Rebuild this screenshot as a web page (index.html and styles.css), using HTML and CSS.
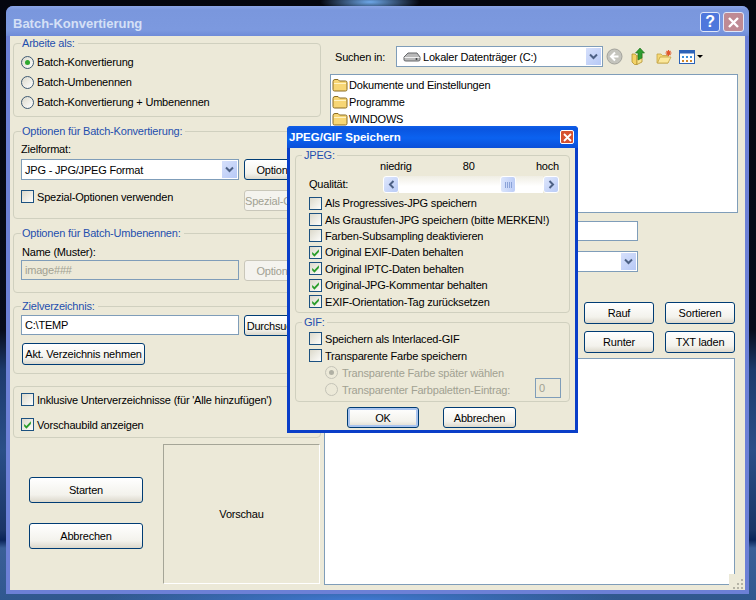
FILE: index.html
```html
<!DOCTYPE html>
<html lang="de">
<head>
  <meta charset="UTF-8">
  <title>Batch-Konvertierung</title>
  <link rel="stylesheet" href="styles.css">
</head>
<body>
  <svg class="defs" width="0" height="0">
    <symbol id="tick" viewBox="0 0 13 13">
      <path d="M2.5 5.8 5.2 8.4 10.5 2.8V6L5.2 11.4 2.5 8.7Z" fill="#2a9d2a"/>
    </symbol>
    <symbol id="chevron" viewBox="0 0 15 17">
      <path d="M4 6.5 7.5 10 11 6.5" fill="none" stroke="#4d6185" stroke-width="2"/>
    </symbol>
    <symbol id="folder" viewBox="0 0 16 14">
      <path d="M1 3.5Q1 1.5 3 1.5H6L7.5 3H13.5Q15 3 15 4.5V11.5Q15 13 13.5 13H2.5Q1 13 1 11.5Z" fill="#f7d675" stroke="#8a6d24"/>
      <path d="M2 5.5H14" stroke="#fff3c4"/>
    </symbol>
  </svg>

  <div class="desktop">
    <div class="window main-window">
      <div class="titlebar">
        <span class="title">Batch-Konvertierung</span>
        <div class="title-buttons">
          <span class="cap-btn help-btn">?</span>
          <span class="cap-btn close-btn">
            <svg width="13" height="13" viewBox="0 0 13 13"><path d="M2 2 11 11M11 2 2 11" stroke="#fff" stroke-width="2.4"/></svg>
          </span>
        </div>
      </div>
      <div class="client">
        <div class="left-col">
          <fieldset class="group group-work">
            <legend>Arbeite als:</legend>
            <div class="row-20"><span class="radio on"></span>Batch-Konvertierung</div>
            <div class="row-20"><span class="radio"></span>Batch-Umbenennen</div>
            <div class="row-20"><span class="radio"></span>Batch-Konvertierung + Umbenennen</div>
          </fieldset>

          <fieldset class="group group-convert">
            <legend>Optionen für Batch-Konvertierung:</legend>
            <div class="field-label">Zielformat:</div>
            <div class="field-row">
              <div class="combo wide"><span class="combo-text">JPG - JPG/JPEG Format</span><svg class="combo-arrow"><use href="#chevron"/></svg></div>
              <button class="btn side-btn">Optionen</button>
            </div>
            <div class="field-row spaced">
              <div class="check-line wide"><span class="check"></span>Spezial-Optionen verwenden</div>
              <button class="btn side-btn spezial-btn" disabled>Spezial-Optionen</button>
            </div>
          </fieldset>

          <fieldset class="group group-rename">
            <legend>Optionen für Batch-Umbenennen:</legend>
            <div class="field-label">Name (Muster):</div>
            <div class="field-row">
              <input class="field wide" value="image###" disabled>
              <button class="btn side-btn" disabled>Optionen</button>
            </div>
          </fieldset>

          <fieldset class="group group-target">
            <legend>Zielverzeichnis:</legend>
            <div class="field-row">
              <input class="field wide" value="C:\TEMP">
              <button class="btn side-btn">Durchsuchen</button>
            </div>
            <button class="btn current-btn">Akt. Verzeichnis nehmen</button>
          </fieldset>

          <fieldset class="group group-misc">
            <div class="check-line"><span class="check"></span>Inklusive Unterverzeichnisse (für 'Alle hinzufügen')</div>
            <div class="check-line preview-check"><span class="check"><svg><use href="#tick"/></svg></span>Vorschaubild anzeigen</div>
          </fieldset>

          <div class="bottom-row">
            <div class="action-col">
              <button class="btn action-btn">Starten</button>
              <button class="btn action-btn">Abbrechen</button>
            </div>
            <div class="preview">Vorschau</div>
          </div>
        </div>

        <div class="right-col">
          <div class="look-row">
            <span class="look-label">Suchen in:</span>
            <div class="combo look-combo">
              <svg class="drive" width="18" height="12" viewBox="0 0 18 12">
                <path d="M1 6 5 2H14L17 6V9Q17 10 15 10H3Q1 10 1 9Z" fill="#b9b9b9" stroke="#66686b"/>
                <path d="M1.5 6.5H16.5" stroke="#efefef"/>
                <circle cx="13.5" cy="8" r="1" fill="#3b3f42"/>
              </svg>
              <span class="combo-text">Lokaler Datenträger (C:)</span>
              <svg class="combo-arrow"><use href="#chevron"/></svg>
            </div>
            <div class="tools">
              <svg width="17" height="17" viewBox="0 0 17 17">
                <circle cx="8.5" cy="8.5" r="7.5" fill="#c4c4bd" stroke="#a3a39c"/>
                <path d="M9 4.5 5 8.5 9 12.5M5.5 8.5H12.5" fill="none" stroke="#fff" stroke-width="2"/>
              </svg>
              <svg width="15" height="19" viewBox="0 0 15 19">
                <path d="M1 7H4L6 9V17.5H3.5L1 15Z" fill="#f3d266" stroke="#b39230" stroke-width=".8"/>
                <path d="M6 9 11 7V15L6 17.5Z" fill="#f8e38f" stroke="#b39230" stroke-width=".8"/>
                <path d="M7 13V6H4.5L9 1 13.5 6H11V11Z" fill="#2f9c2f" stroke="#1b6f1b" stroke-width=".6"/>
              </svg>
              <svg class="new-folder" width="17" height="15" viewBox="0 0 17 15">
                <path d="M1 5H5L6.5 6.5H12V14H1Z" fill="#f6d873" stroke="#c4a345" stroke-width=".8"/>
                <path d="M1.5 14 4 8H15L12 14Z" fill="#fbe89c" stroke="#c4a345" stroke-width=".8"/>
                <path d="M12.5 1V7M9.5 4H15.5M10.5 2 14.5 6M14.5 2 10.5 6" stroke="#e0562a" stroke-width="1.1"/>
              </svg>
              <span class="views">
                <svg width="16" height="14" viewBox="0 0 16 14">
                  <rect x=".5" y=".5" width="15" height="13" fill="#fff" stroke="#2b62b8"/>
                  <rect x=".5" y=".5" width="15" height="3" fill="#2b62b8"/>
                  <path d="M3 6H5V8H3ZM7 6H9V8H7ZM11 6H13V8H11Z" fill="#3b8fd8"/>
                  <path d="M3 10H5V12H3ZM7 10H9V12H7ZM11 10H13V12H11Z" fill="#d0872e"/>
                </svg>
                <i class="drop"></i>
              </span>
            </div>
          </div>

          <div class="file-list">
            <div class="file"><svg class="folder"><use href="#folder"/></svg>Dokumente und Einstellungen</div>
            <div class="file"><svg class="folder"><use href="#folder"/></svg>Programme</div>
            <div class="file"><svg class="folder"><use href="#folder"/></svg>WINDOWS</div>
          </div>

          <input class="field name-input">
          <div class="combo type-combo"><span class="combo-text"></span><svg class="combo-arrow"><use href="#chevron"/></svg></div>

          <div class="list-buttons">
            <button class="btn">Rauf</button>
            <button class="btn">Sortieren</button>
            <button class="btn">Runter</button>
            <button class="btn">TXT laden</button>
          </div>

          <div class="batch-list"></div>
          <svg class="grip" width="16" height="16" viewBox="0 0 16 16">
            <path d="M12 5H14V7H12ZM8 9H10V11H8ZM12 9H14V11H12ZM4 13H6V15H4ZM8 13H10V15H8ZM12 13H14V15H12Z" fill="#b5b3a6"/>
          </svg>
        </div>
      </div>
    </div>

    <div class="window jpeg-dialog">
      <div class="dlg-titlebar">
        <span class="dlg-title">JPEG/GIF Speichern</span>
        <span class="dlg-close">
          <svg width="9" height="9" viewBox="0 0 9 9"><path d="M1 1 8 8M8 1 1 8" stroke="#fff" stroke-width="1.8"/></svg>
        </span>
      </div>
      <div class="dlg-client">
        <fieldset class="group group-jpeg">
          <legend>JPEG:</legend>
          <div class="scale-labels"><span>niedrig</span><span class="scale-value">80</span><span>hoch</span></div>
          <div class="quality-row">
            <span class="quality-label">Qualität:</span>
            <div class="scrollbar">
              <span class="sb-btn">
                <svg width="7" height="9" viewBox="0 0 7 9"><path d="M5.5 1 2 4.5 5.5 8" fill="none" stroke="#4d6185" stroke-width="2"/></svg>
              </span>
              <div class="sb-track"><span class="sb-thumb"><i></i><i></i><i></i><i></i></span></div>
              <span class="sb-btn">
                <svg width="7" height="9" viewBox="0 0 7 9"><path d="M1.5 1 5 4.5 1.5 8" fill="none" stroke="#4d6185" stroke-width="2"/></svg>
              </span>
            </div>
          </div>
          <div class="dlg-check"><span class="check"></span>Als Progressives-JPG speichern</div>
          <div class="dlg-check"><span class="check"></span>Als Graustufen-JPG speichern (bitte MERKEN!)</div>
          <div class="dlg-check"><span class="check"></span>Farben-Subsampling deaktivieren</div>
          <div class="dlg-check"><span class="check"><svg><use href="#tick"/></svg></span>Original EXIF-Daten behalten</div>
          <div class="dlg-check"><span class="check"><svg><use href="#tick"/></svg></span>Original IPTC-Daten behalten</div>
          <div class="dlg-check"><span class="check"><svg><use href="#tick"/></svg></span>Original-JPG-Kommentar behalten</div>
          <div class="dlg-check"><span class="check"><svg><use href="#tick"/></svg></span>EXIF-Orientation-Tag zurücksetzen</div>
        </fieldset>

        <fieldset class="group group-gif">
          <legend>GIF:</legend>
          <div class="dlg-check"><span class="check"></span>Speichern als Interlaced-GIF</div>
          <div class="dlg-check"><span class="check"></span>Transparente Farbe speichern</div>
          <div class="transparent-opts">
            <div class="opts-list">
              <div class="dlg-radio off"><span class="radio on"></span>Transparente Farbe später wählen</div>
              <div class="dlg-radio off"><span class="radio"></span>Transparenter Farbpaletten-Eintrag:</div>
            </div>
            <input class="field palette-input" value="0" disabled>
          </div>
        </fieldset>

        <div class="dlg-buttons">
          <button class="btn ok-btn">OK</button>
          <button class="btn cancel-btn">Abbrechen</button>
        </div>
      </div>
    </div>
  </div>
</body>
</html>
```

FILE: styles.css
```css
* {
  box-sizing: border-box;
}
body {
  margin: 0;
  font-family: "Liberation Sans", Arial, sans-serif;
  font-size: 11px;
  letter-spacing: -0.2px;
  color: #000;
  overflow: hidden;
}
.defs {
  display: block;
  height: 0;
}

/* wallpaper and free-floating windows */
.desktop {
  position: relative;
  width: 756px;
  height: 600px;
  overflow: hidden;
  background:
    radial-gradient(ellipse 50px 10px at 370px 2px, #6ea8ea, transparent),
    radial-gradient(ellipse 260px 16px at 360px 600px, #4079d2, transparent),
    linear-gradient(#04060e 0, #070c1c 330px, #1d3a6c 370px, #2a4f88 450px, #1b3566 530px, #0a2358 540px, #3a5f98 548px, #30588f 600px);
}
.window {
  position: absolute;
}
.main-window {
  left: 6px;
  top: 6px;
  width: 743px;
  height: 588px;
  padding: 0 4px 4px;
  background: #6c80d6;
  border-radius: 7px 7px 0 0;
}
.jpeg-dialog {
  left: 287px;
  top: 126px;
  width: 291px;
  height: 307px;
  padding: 0 3px 3px;
  background: #0a3ec8;
  border-radius: 4px 4px 0 0;
}

/* main title bar */
.titlebar {
  display: flex;
  justify-content: space-between;
  align-items: center;
  height: 30px;
  margin: 0 -4px;
  padding: 0 5px 0 7px;
  background: linear-gradient(#8ba5e6 0, #7a97dd 4px, #7c99df 24px, #6f8bd8 30px);
  border-radius: 7px 7px 0 0;
}
.title {
  margin-top: 5px;
  font-size: 13px;
  font-weight: bold;
  letter-spacing: 0;
  color: #d5e0f6;
}
.title-buttons {
  display: flex;
  gap: 3px;
  margin-top: 2px;
}
.cap-btn {
  display: flex;
  align-items: center;
  justify-content: center;
  width: 20px;
  height: 20px;
  border: 1px solid #dfe6f8;
  border-radius: 3px;
}
.help-btn {
  background: #4e77dc;
  color: #fff;
  font-size: 16px;
  font-weight: bold;
}
.close-btn {
  width: 21px;
  background: #bf8a93;
}

.client {
  display: grid;
  grid-template-columns: 311px 1fr;
  height: 554px;
  padding-left: 3px;
  background: #ece9d8;
}

/* left column */
.left-col {
  display: flex;
  flex-direction: column;
  padding-bottom: 6px;
}
.group {
  margin: 0;
  padding: 0 8px 0 7px;
  min-width: 0;
  border: 1px solid #d0d0bf;
  border-radius: 4px;
}
.group legend {
  height: 14px;
  padding: 0 3px 0 1px;
  margin-left: 0;
  line-height: 14px;
  color: #1f4fae;
}
.left-col .group {
  width: 308px;
}
.group-work {
  height: 81px;
}
.group-convert {
  height: 95px;
  margin-top: 7px;
}
.group-rename {
  height: 67px;
  margin-top: 7px;
}
.group-target {
  height: 75px;
  margin-top: 6px;
}
.group-misc {
  height: 52px;
  margin-top: 12px;
  padding-top: 6px;
}
.row-20 {
  display: flex;
  align-items: center;
  gap: 3px;
  height: 20px;
}
.group-work .row-20:first-of-type {
  margin-top: 2px;
}
.field-label {
  height: 21px;
  padding-top: 2px;
  line-height: 18px;
}
.group-rename .field-label {
  height: 20px;
  padding: 3px 0 0 1px;
}
.field-row {
  display: flex;
  gap: 5px;
  width: 291px;
  overflow: hidden;
}
.group-target .field-row {
  padding-top: 2px;
}
.field-row.spaced {
  margin-top: 8px;
  padding-top: 2px;
}
.wide {
  flex: 0 0 218px;
}
.side-btn {
  flex: 0 0 68px;
  height: 21px;
}
.spezial-btn {
  padding-left: 6px;
  text-align: left;
}
.check-line {
  display: flex;
  align-items: center;
  gap: 3px;
  height: 13px;
  white-space: nowrap;
}
.preview-check {
  margin-top: 12px;
}
.current-btn {
  display: block;
  width: 123px;
  height: 22px;
  margin: 7px 0 0 1px;
  padding: 0;
}
.bottom-row {
  display: flex;
  margin-top: 6px;
  flex: 1;
}
.action-col {
  display: flex;
  flex-direction: column;
  gap: 20px;
  width: 150px;
  padding: 33px 0 0 16px;
}
.action-btn {
  width: 114px;
  height: 26px;
}
.preview {
  display: flex;
  align-items: center;
  justify-content: center;
  width: 157px;
  height: 140px;
  border: 1px solid;
  border-color: #a5a597 #fff #fff #a5a597;
}

/* controls */
.radio {
  position: relative;
  flex: none;
  width: 13px;
  height: 13px;
  background: linear-gradient(135deg, #dcd9cb, #fff);
  border: 1px solid #3f5a73;
  border-radius: 50%;
}
.radio.on::after {
  content: "";
  position: absolute;
  left: 3px;
  top: 3px;
  width: 5px;
  height: 5px;
  border-radius: 50%;
  background: #2fa82f;
}
.check {
  flex: none;
  display: block;
  width: 13px;
  height: 13px;
  background: linear-gradient(135deg, #dcd9cb, #fdfdfb);
  border: 1px solid #1c5180;
}
.check svg {
  display: block;
  width: 11px;
  height: 11px;
}
.btn {
  font: inherit;
  letter-spacing: inherit;
  color: #000;
  padding: 0;
  background: linear-gradient(#fff, #f3f2ec 70%, #dcd8cc);
  border: 1px solid #003c74;
  border-radius: 3px;
  white-space: nowrap;
  overflow: hidden;
}
.btn:disabled {
  color: #a1a192;
  background: #f4f3ee;
  border-color: #c9c7ba;
}
.field {
  font: inherit;
  letter-spacing: inherit;
  height: 20px;
  padding: 0 3px;
  color: #000;
  background: #fff;
  border: 1px solid #7f9db9;
  border-radius: 0;
  outline: none;
}
.field:disabled {
  color: #a1a192;
  background: #ece9d8;
}
.combo {
  display: flex;
  align-items: center;
  height: 21px;
  padding: 1px;
  background: #fff;
  border: 1px solid #7f9db9;
}
.combo-text {
  flex: 1;
  padding-left: 2px;
  white-space: nowrap;
}
.combo-arrow {
  flex: none;
  width: 15px;
  height: 17px;
  background: linear-gradient(135deg, #d6e0fb, #b7c9f6);
}

/* right column */
.right-col {
  position: relative;
  padding-top: 10px;
}
.look-row {
  display: flex;
  align-items: center;
  padding-left: 11px;
}
.look-label {
  width: 61px;
}
.look-combo {
  width: 207px;
}
.drive {
  flex: none;
  margin-left: 5px;
}
.look-combo .combo-text {
  padding-left: 2px;
}
.tools {
  display: flex;
  align-items: center;
  gap: 8px;
  margin-left: 3px;
}
.new-folder {
  margin-left: 2px;
}
.views {
  display: flex;
  align-items: center;
  gap: 2px;
  margin-left: -2px;
}
.drop {
  width: 0;
  height: 0;
  border: 3px solid transparent;
  border-top: 3px solid #000;
  border-bottom: 0;
}
.file-list {
  width: 408px;
  height: 139px;
  margin: 7px 0 0 6px;
  padding-top: 1px;
  background: #fff;
  border: 1px solid #7f9db9;
}
.file {
  display: flex;
  align-items: center;
  gap: 1px;
  height: 17px;
  padding-left: 1px;
}
.folder {
  width: 16px;
  height: 14px;
}
.name-input {
  display: block;
  width: 300px;
  margin: 8px 0 0 14px;
}
.type-combo {
  width: 300px;
  margin: 10px 0 0 14px;
}
.list-buttons {
  display: grid;
  grid-template-columns: 70px 70px;
  grid-auto-rows: 22px;
  gap: 7px 11px;
  margin: 30px 0 0 260px;
}
.batch-list {
  width: 411px;
  height: 227px;
  margin-top: 5px;
  background: #fff;
  border: 1px solid #7f9db9;
}
.grip {
  position: absolute;
  right: 0;
  bottom: 0;
  background: #ece9d8;
}

/* JPEG / GIF dialog */
.dlg-titlebar {
  display: flex;
  align-items: center;
  justify-content: space-between;
  height: 22px;
  margin: 0 -3px;
  padding: 0 4px 0 2px;
  background: linear-gradient(#0f5ee8 0, #0a55e0 3px, #0b62f0 12px, #0a4fd8 22px);
  border-radius: 4px 4px 0 0;
}
.dlg-title {
  font-size: 11.5px;
  font-weight: bold;
  letter-spacing: 0;
  color: #fff;
}
.dlg-close {
  display: flex;
  align-items: center;
  justify-content: center;
  width: 14px;
  height: 14px;
  background: #d6512f;
  border: 1px solid #fff;
  border-radius: 2px;
}
.dlg-client {
  height: 282px;
  padding: 0 5px;
  background: #ece9d8;
}
.group-jpeg {
  height: 165px;
  margin-top: 0;
  padding: 0 10px 0 13px;
}
.group-gif {
  height: 87px;
  margin-top: 2px;
  padding: 1px 10px 0 13px;
}
.jpeg-dialog .group legend {
  margin-left: -7px;
  padding: 0 2px;
}
.scale-labels {
  display: flex;
  justify-content: space-between;
  height: 14px;
  margin-top: -2px;
  padding-left: 71px;
  line-height: 12px;
}
.scale-value {
  margin-right: 10px;
}
.quality-row {
  display: flex;
  align-items: center;
  height: 21px;
}
.quality-label {
  width: 74px;
  margin-bottom: 2px;
}
.scrollbar {
  display: flex;
  flex: 1;
  height: 17px;
}
.sb-btn {
  display: flex;
  align-items: center;
  justify-content: center;
  width: 16px;
  background: linear-gradient(135deg, #dfe7fc, #b9cbf6);
  border: 1px solid #fff;
  border-radius: 3px;
}
.sb-track {
  display: flex;
  justify-content: flex-end;
  flex: 1;
  padding-right: 27px;
  background: linear-gradient(#f0eee4, #fff 60%, #fff);
}
.sb-thumb {
  display: flex;
  align-items: center;
  justify-content: center;
  gap: 1px;
  width: 16px;
  background: linear-gradient(90deg, #dbe5fc, #bccdf7);
  border: 1px solid #fff;
  border-radius: 3px;
}
.sb-thumb i {
  width: 1px;
  height: 6px;
  background: #8ba3d8;
}
.dlg-check,
.dlg-radio {
  display: flex;
  align-items: center;
  gap: 3px;
  height: 16.4px;
  white-space: nowrap;
}
.group-gif .dlg-check,
.group-gif .dlg-radio {
  height: 17px;
}
.transparent-opts {
  display: flex;
  justify-content: space-between;
  align-items: flex-start;
  padding-left: 16px;
}
.dlg-radio.off {
  color: #a1a192;
  gap: 4px;
}
.dlg-radio .radio {
  background: #ece9d8;
  border-color: #c4c3b7;
}
.dlg-radio .radio.on::after {
  background: #b0b0a4;
}
.palette-input {
  width: 26px;
  margin: 14px -2px 0 0;
}
.dlg-buttons {
  display: flex;
  gap: 24px;
  margin: 5px 0 0 52px;
}
.ok-btn {
  width: 72px;
  height: 21px;
  box-shadow: inset 0 0 0 2px #a9c4ef;
}
.cancel-btn {
  width: 73px;
  height: 21px;
}
```
